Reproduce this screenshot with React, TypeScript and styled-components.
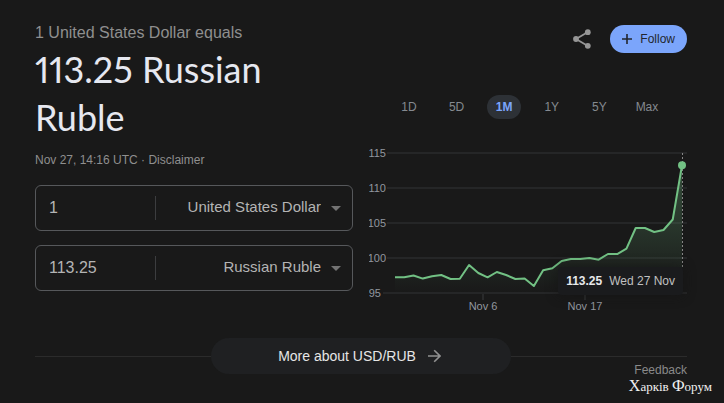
import React, { useState } from "react";
import styled, { createGlobalStyle } from "styled-components";

const GlobalStyle = createGlobalStyle`
  *, *::before, *::after { box-sizing: border-box; }
  html { background: #191919; }
  body {
    margin: 0;
    background: #191919;
    color: #e8e8e8;
    font-family: "Liberation Sans", Arial, sans-serif;
  }
  button, input, select { font-family: inherit; }
`;

const Card = styled.main`
  position: relative;
  min-height: 100vh;
  padding: 23px 37px 8px 35px;
`;

const Columns = styled.div`
  display: grid;
  grid-template-columns: 1fr 1fr;
  gap: 16px;
`;

const Column = styled.section`
  display: flex;
  flex-direction: column;
  min-width: 0;
`;

const Subtitle = styled.div`
  font-size: 16px;
  line-height: 20px;
  color: #8f8f8f;
`;

const Headline = styled.h1`
  margin: 2px 0 9px;
  font-family: "Google Sans", Lato, sans-serif;
  font-size: 36px;
  font-weight: 400;
  font-variant-numeric: proportional-nums;
  line-height: 48px;
  color: #e6e8f0;
`;

const Timestamp = styled.div`
  font-size: 12px;
  line-height: 20px;
  color: #8f8f8f;
`;

const TextLink = styled.a`
  color: inherit;
  text-decoration: none;
`;

const Fields = styled.div`
  display: grid;
  gap: 14px;
  margin-top: 15px;
`;

const Field = styled.div`
  position: relative;
  display: flex;
  align-items: center;
  height: 46px;
  border: 1px solid #56585b;
  border-radius: 6px;
`;

const AmountInput = styled.input`
  flex: 0 0 120px;
  min-width: 0;
  width: 120px;
  height: 24px;
  padding: 0 0 0 13px;
  border: 0;
  border-right: 1px solid #3c3d3f;
  background: transparent;
  color: #b4b4b4;
  font-size: 16px;
  outline: none;
`;

const CurrencySelect = styled.select`
  flex: 1;
  min-width: 0;
  height: 44px;
  padding: 0 31px 3px 8px;
  border: 0;
  appearance: none;
  background: transparent;
  color: #b4b4b4;
  font-size: 15px;
  text-align: right;
  text-align-last: right;
  outline: none;
`;

const Caret = styled.svg`
  position: absolute;
  right: 11px;
  pointer-events: none;
`;

const Actions = styled.div`
  display: flex;
  align-items: center;
  justify-content: flex-end;
  gap: 16px;
  margin-top: 2px;
`;

const IconButton = styled.button`
  display: flex;
  padding: 0;
  border: 0;
  background: none;
  color: #969696;
`;

const FollowButton = styled.button`
  display: flex;
  align-items: center;
  gap: 8px;
  height: 28px;
  padding: 0 12px;
  border: 0;
  border-radius: 14px;
  background: #7ba5fb;
  color: #22262e;
  font-size: 12px;
`;

const Ranges = styled.div`
  display: flex;
  justify-content: space-between;
  margin: 42px 23px 0;
`;

const RangeButton = styled.button<{ $active: boolean }>`
  min-width: 34px;
  height: 24px;
  padding: 0;
  border: 0;
  border-radius: 12px;
  background: ${(p) => (p.$active ? "#2d3136" : "transparent")};
  color: ${(p) => (p.$active ? "#7ba5fb" : "#858a90")};
  font-size: 12px;
  font-weight: ${(p) => (p.$active ? 700 : 400)};
`;

const ChartArea = styled.div`
  position: relative;
  margin-top: 24px;
`;

const ChartSvg = styled.svg`
  display: block;
  width: 100%;
  height: auto;
`;

const AxisLabel = styled.text`
  fill: #92979f;
  font-size: 11px;
`;

const Tooltip = styled.div`
  position: absolute;
  right: 4px;
  bottom: 25px;
  display: flex;
  gap: 7px;
  padding: 0 8px;
  border-radius: 4px;
  background: #1a1b1d;
  box-shadow: 0 0 12px rgba(20, 20, 20, 0.7);
  color: #c0c0c0;
  font-size: 12px;
  line-height: 28px;
  white-space: nowrap;
`;

const TooltipValue = styled.strong`
  color: #e6e8ea;
`;

const More = styled.div`
  display: flex;
  align-items: center;
  margin-top: 18px;

  &::before,
  &::after {
    content: "";
    flex: 1;
    height: 1px;
    background: #2b2b2b;
  }
`;

const MoreButton = styled.button`
  display: flex;
  align-items: center;
  justify-content: center;
  gap: 12px;
  width: 300px;
  height: 36px;
  padding: 0 3px 0 0;
  border: 0;
  border-radius: 18px;
  background: #1f2022;
  color: #e6e6e6;
  font-size: 14px;
`;

const FeedbackRow = styled.footer`
  display: flex;
  justify-content: flex-end;
  margin-top: -10px;
  font-size: 12px;
  line-height: 12px;
  color: #8a8a8a;
`;

const Watermark = styled.div`
  position: absolute;
  right: 12px;
  bottom: 8px;
  font-family: "Liberation Serif", serif;
  font-size: 13px;
  line-height: 16px;
  color: #f0f0f0;

  span {
    font-size: 16px;
  }
`;

const rates = [
  97.24, 97.24, 97.49, 97.06, 97.39, 97.57, 97, 97.04, 99, 97.86, 97.24, 98,
  97.57, 97, 97.07, 96, 98.24, 98.53, 99.57, 99.86, 99.86, 100, 99.76, 100.57,
  100.57, 101.33, 104.29, 104.29, 103.71, 104, 105.5, 113.25,
];

const levels = [115, 110, 105, 100, 95];
const ranges = ["1D", "5D", "1M", "1Y", "5Y", "Max"];
const currencies = ["United States Dollar", "Russian Ruble"];

const xAt = (i: number) => 26 + (i * 287) / (rates.length - 1);
const yAt = (rate: number) => 10 + (115 - rate) * 7;

function RateChart() {
  const line = rates.map((r, i) => `${xAt(i)},${yAt(r)}`).join(" ");
  const lastX = xAt(rates.length - 1);
  const lastY = yAt(rates[rates.length - 1]);
  return (
    <ChartArea>
      <ChartSvg viewBox="0 0 318 177" role="img" aria-label="USD to RUB over one month">
        <defs>
          <linearGradient id="fill" x1="0" y1="0" x2="0" y2="1">
            <stop offset="0" stopColor="#72c184" stopOpacity="0.32" />
            <stop offset="1" stopColor="#72c184" stopOpacity="0" />
          </linearGradient>
        </defs>
        {levels.map((level) => (
          <g key={level}>
            <rect x={level === 95 ? 14 : 18} y={yAt(level) - 1} width={level === 95 ? 304 : 300} height="2" fill="#252627" />
            <AxisLabel x={level === 95 ? 12 : 17} y={yAt(level) + 4} textAnchor="end">{level}</AxisLabel>
          </g>
        ))}
        <rect x="113" y="151" width="2" height="6" fill="#292a2b" />
        <rect x="215" y="151" width="2" height="6" fill="#292a2b" />
        <AxisLabel x="114" y="167" textAnchor="middle">Nov 6</AxisLabel>
        <AxisLabel x="216" y="167" textAnchor="middle">Nov 17</AxisLabel>
        <polygon points={`26,150 ${line} ${lastX},150`} fill="url(#fill)" />
        <path d={`M${lastX + 0.5} 10V124`} stroke="#858585" strokeDasharray="2 2" />
        <polyline points={line} fill="none" stroke="#72c184" strokeWidth="2" strokeLinejoin="round" />
        <circle cx={lastX} cy={lastY} r="4" fill="#72c184" />
      </ChartSvg>
      <Tooltip>
        <TooltipValue>113.25</TooltipValue>
        <span>Wed 27 Nov</span>
      </Tooltip>
    </ChartArea>
  );
}

function CurrencyField({ amount, currency }: { amount: string; currency: string }) {
  return (
    <Field>
      <AmountInput aria-label={`Amount in ${currency}`} defaultValue={amount} />
      <CurrencySelect aria-label="Currency" defaultValue={currency}>
        {currencies.map((c) => (
          <option key={c}>{c}</option>
        ))}
      </CurrencySelect>
      <Caret width="10" height="5" viewBox="0 0 10 5" aria-hidden="true">
        <path d="M0 0h10L5 5z" fill="#737373" />
      </Caret>
    </Field>
  );
}

export default function App() {
  const [range, setRange] = useState("1M");
  return (
    <>
      <GlobalStyle />
      <Card>
        <Columns>
          <Column>
            <Subtitle>1 United States Dollar equals</Subtitle>
            <Headline>113.25 Russian Ruble</Headline>
            <Timestamp>
              Nov 27, 14:16 UTC · <TextLink href="#disclaimer">Disclaimer</TextLink>
            </Timestamp>
            <Fields>
              <CurrencyField amount="1" currency="United States Dollar" />
              <CurrencyField amount="113.25" currency="Russian Ruble" />
            </Fields>
          </Column>
          <Column>
            <Actions>
              <IconButton aria-label="Share">
                <svg width="24" height="24" viewBox="0 0 24 24" fill="currentColor">
                  <path d="M6 12 17.5 5.2M6 12l11.5 6.8" stroke="currentColor" strokeWidth="1.8" />
                  <circle cx="17.8" cy="5.2" r="2.9" />
                  <circle cx="6" cy="12" r="2.9" />
                  <circle cx="17.8" cy="18.8" r="2.9" />
                </svg>
              </IconButton>
              <FollowButton>
                <svg width="10" height="10" viewBox="0 0 10 10" aria-hidden="true">
                  <path d="M5 0v10M0 5h10" stroke="currentColor" strokeWidth="1.6" />
                </svg>
                Follow
              </FollowButton>
            </Actions>
            <Ranges>
              {ranges.map((r) => (
                <RangeButton key={r} $active={r === range} aria-pressed={r === range} onClick={() => setRange(r)}>
                  {r}
                </RangeButton>
              ))}
            </Ranges>
            <RateChart />
          </Column>
        </Columns>
        <More>
          <MoreButton>
            More about USD/RUB
            <svg width="13" height="14" viewBox="0 0 13 14" fill="none" aria-hidden="true">
              <path d="M0 7h12M6.2 1.2 12 7l-5.8 5.8" stroke="#919191" strokeWidth="1.6" />
            </svg>
          </MoreButton>
        </More>
        <FeedbackRow>
          <TextLink href="#feedback">Feedback</TextLink>
        </FeedbackRow>
        <Watermark>
          <span>Х</span>арків <span>Ф</span>орум
        </Watermark>
      </Card>
    </>
  );
}
